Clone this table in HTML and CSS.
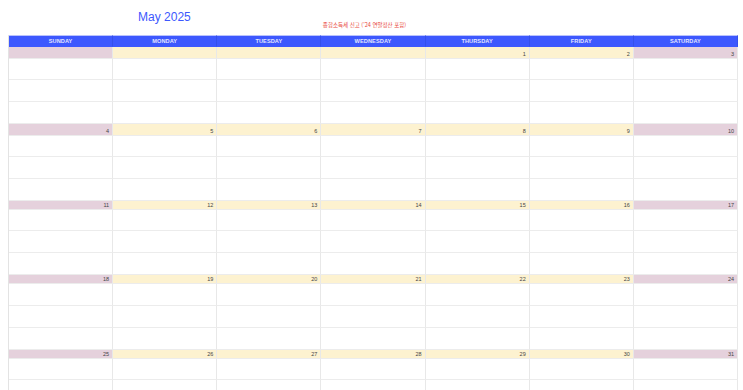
FILE: index.html
```html
<!DOCTYPE html>
<html lang="ko">
<head>
<meta charset="utf-8">
<title>May 2025</title>
<link rel="stylesheet" href="styles.css">
</head>
<body>
<div class="page">
  <div class="top">
    <div class="slot"></div>
    <div class="slot"><h1 class="title">May 2025</h1></div>
    <div class="slot"></div>
    <div class="slot"><p class="note">종합소득세 신고 ('24 연말정산 포함)</p></div>
    <div class="slot"></div>
    <div class="slot"></div>
    <div class="slot"></div>
  </div>
  <div class="cal">
    <div class="hd">SUNDAY</div><div class="hd">MONDAY</div><div class="hd">TUESDAY</div><div class="hd">WEDNESDAY</div><div class="hd">THURSDAY</div><div class="hd">FRIDAY</div><div class="hd">SATURDAY</div>

    <div class="d h12 we"></div><div class="d h12"></div><div class="d h12"></div><div class="d h12"></div><div class="d h12">1</div><div class="d h12">2</div><div class="d h12 we">3</div>
    <div class="b h21"></div><div class="b h21"></div><div class="b h21"></div><div class="b h21"></div><div class="b h21"></div><div class="b h21"></div><div class="b h21"></div>
    <div class="b h22"></div><div class="b h22"></div><div class="b h22"></div><div class="b h22"></div><div class="b h22"></div><div class="b h22"></div><div class="b h22"></div>
    <div class="b h22"></div><div class="b h22"></div><div class="b h22"></div><div class="b h22"></div><div class="b h22"></div><div class="b h22"></div><div class="b h22"></div>

    <div class="d h12 we">4</div><div class="d h12">5</div><div class="d h12">6</div><div class="d h12">7</div><div class="d h12">8</div><div class="d h12">9</div><div class="d h12 we">10</div>
    <div class="b h21"></div><div class="b h21"></div><div class="b h21"></div><div class="b h21"></div><div class="b h21"></div><div class="b h21"></div><div class="b h21"></div>
    <div class="b h22"></div><div class="b h22"></div><div class="b h22"></div><div class="b h22"></div><div class="b h22"></div><div class="b h22"></div><div class="b h22"></div>
    <div class="b h22"></div><div class="b h22"></div><div class="b h22"></div><div class="b h22"></div><div class="b h22"></div><div class="b h22"></div><div class="b h22"></div>

    <div class="d h9 we">11</div><div class="d h9">12</div><div class="d h9">13</div><div class="d h9">14</div><div class="d h9">15</div><div class="d h9">16</div><div class="d h9 we">17</div>
    <div class="b h21"></div><div class="b h21"></div><div class="b h21"></div><div class="b h21"></div><div class="b h21"></div><div class="b h21"></div><div class="b h21"></div>
    <div class="b h22"></div><div class="b h22"></div><div class="b h22"></div><div class="b h22"></div><div class="b h22"></div><div class="b h22"></div><div class="b h22"></div>
    <div class="b h22"></div><div class="b h22"></div><div class="b h22"></div><div class="b h22"></div><div class="b h22"></div><div class="b h22"></div><div class="b h22"></div>

    <div class="d h9 we">18</div><div class="d h9">19</div><div class="d h9">20</div><div class="d h9">21</div><div class="d h9">22</div><div class="d h9">23</div><div class="d h9 we">24</div>
    <div class="b h22"></div><div class="b h22"></div><div class="b h22"></div><div class="b h22"></div><div class="b h22"></div><div class="b h22"></div><div class="b h22"></div>
    <div class="b h22"></div><div class="b h22"></div><div class="b h22"></div><div class="b h22"></div><div class="b h22"></div><div class="b h22"></div><div class="b h22"></div>
    <div class="b h22"></div><div class="b h22"></div><div class="b h22"></div><div class="b h22"></div><div class="b h22"></div><div class="b h22"></div><div class="b h22"></div>

    <div class="d h9 we">25</div><div class="d h9">26</div><div class="d h9">27</div><div class="d h9">28</div><div class="d h9">29</div><div class="d h9">30</div><div class="d h9 we">31</div>
    <div class="b h21"></div><div class="b h21"></div><div class="b h21"></div><div class="b h21"></div><div class="b h21"></div><div class="b h21"></div><div class="b h21"></div>
    <div class="b h22"></div><div class="b h22"></div><div class="b h22"></div><div class="b h22"></div><div class="b h22"></div><div class="b h22"></div><div class="b h22"></div>
    <div class="b h22"></div><div class="b h22"></div><div class="b h22"></div><div class="b h22"></div><div class="b h22"></div><div class="b h22"></div><div class="b h22"></div>
  </div>
</div>
</body>
</html>
```

FILE: styles.css
```css
html, body {
  margin: 0;
  padding: 0;
  background: #ffffff;
}
body {
  font-family: "Liberation Sans", Arial, "Noto Sans CJK KR", sans-serif;
  overflow: hidden;
}
.page {
  padding-left: 8px;
  width: 730px;
}
.top {
  display: grid;
  grid-template-columns: repeat(7, 1fr);
  height: 35px;
}
.slot {
  min-width: 0;
}
.title {
  margin: 0;
  padding-top: 10px;
  font-size: 12px;
  line-height: 14px;
  font-weight: normal;
  color: #3d58fe;
  text-align: center;
  white-space: nowrap;
}
.note {
  margin: 0;
  padding-top: 21px;
  padding-left: 2px;
  font-family: "Noto Sans CJK KR", "Liberation Sans", sans-serif;
  font-size: 5.5px;
  line-height: 8px;
  color: #e8473a;
  white-space: nowrap;
}
.cal {
  box-sizing: border-box;
  width: 730px;
  display: grid;
  grid-template-columns: repeat(7, 1fr);
  border-left: 1px solid #e3e3e3;
}
.cal > div {
  box-sizing: border-box;
  min-width: 0;
  border-right: 1px solid #e8e8e8;
  border-bottom: 1px solid #ececec;
}
.cal > .hd {
  height: 12px;
  background: #3d58fe;
  border-top: 1px solid #b9c2fd;
  border-right-color: #3550ea;
  border-bottom-color: #3d58fe;
  color: #e3e6ff;
  font-size: 5.6px;
  font-weight: bold;
  line-height: 10px;
  text-align: center;
  letter-spacing: 0.1px;
}
.d {
  background: #fdf2d0;
  color: #444444;
  font-size: 5.5px;
  text-align: right;
  padding-right: 3px;
}
.d.we {
  background: #e5d1dc;
}
.h12 { height: 12px; line-height: 14px; }
.h9 { height: 9px; line-height: 9px; }
.b { background: #ffffff; }
.h21 { height: 21px; }
.h22 { height: 22px; }
```
